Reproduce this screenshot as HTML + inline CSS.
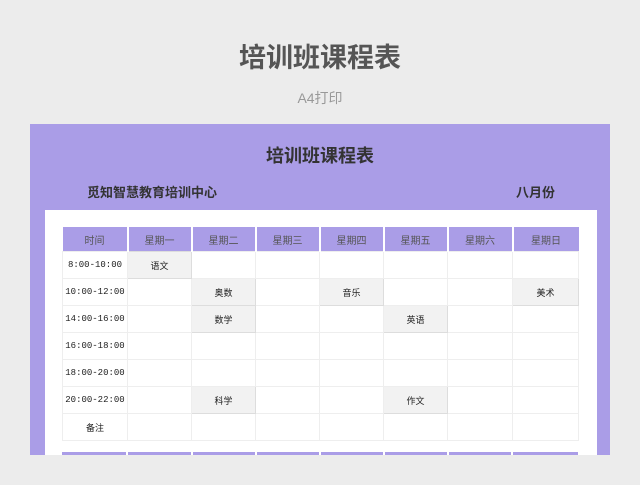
<!DOCTYPE html><html><head><meta charset="utf-8"><style>
body{margin:0;width:640px;height:485px;background:#ececec;font-family:"Liberation Sans","Noto Sans CJK SC",sans-serif;position:relative;overflow:hidden}
.t{position:absolute;left:0;width:640px;text-align:center}
.p{position:absolute;left:30px;top:124px;width:580px;height:331px;background:#aa9de7}
.w{position:absolute;left:45px;top:210px;width:552px;height:245px;background:#fff}
table{position:absolute;left:62px;top:227px;width:516px;border-collapse:collapse;table-layout:fixed}
td{height:26px;border:1px solid #eee;font-size:9px;text-align:center;color:#222;padding:0}
td:first-child{font-family:"Liberation Mono","Noto Sans CJK SC",monospace;font-size:9px}
th{height:24px;background:#aa9de7;color:#555;font-weight:normal;font-size:10px;border-left:2px solid #fff;border-right:0;padding:0}
th:first-child{border-left:0}
.g{background:#f2f2f2;border:1px solid #ddd}
.s{position:absolute;top:452px;height:3px;background:#aa9de7}
</style></head><body>
<div class="t" style="top:36px;font-size:27px;color:#555;font-weight:bold">培训班课程表</div>
<div class="t" style="top:88px;font-size:14px;color:#999">A4打印</div>
<div class="p"></div>
<div class="t" style="top:142px;font-size:18px;font-weight:bold;color:#333">培训班课程表</div>
<div style="position:absolute;left:87px;top:182px;font-size:13px;font-weight:bold;color:#333">觅知智慧教育培训中心</div>
<div style="position:absolute;left:516px;top:182px;font-size:13px;font-weight:bold;color:#333">八月份</div>
<div class="w"></div>
<table>
<colgroup><col style="width:65px"><col style="width:64px"><col style="width:64px"><col style="width:64px"><col style="width:64px"><col style="width:64px"><col style="width:65px"><col style="width:66px"></colgroup>
<tr><th>时间</th><th>星期一</th><th>星期二</th><th>星期三</th><th>星期四</th><th>星期五</th><th>星期六</th><th>星期日</th></tr>
<tr><td>8:00-10:00</td><td class="g">语文</td><td></td><td></td><td></td><td></td><td></td><td></td></tr>
<tr><td>10:00-12:00</td><td></td><td class="g">奥数</td><td></td><td class="g">音乐</td><td></td><td></td><td class="g">美术</td></tr>
<tr><td>14:00-16:00</td><td></td><td class="g">数学</td><td></td><td></td><td class="g">英语</td><td></td><td></td></tr>
<tr><td>16:00-18:00</td><td></td><td></td><td></td><td></td><td></td><td></td><td></td></tr>
<tr><td>18:00-20:00</td><td></td><td></td><td></td><td></td><td></td><td></td><td></td></tr>
<tr><td>20:00-22:00</td><td></td><td class="g">科学</td><td></td><td></td><td class="g">作文</td><td></td><td></td></tr>
<tr><td>备注</td><td></td><td></td><td></td><td></td><td></td><td></td><td></td></tr>
</table>
<div class="s" style="left:62px;width:64px"></div><div class="s" style="left:128px;width:63px"></div><div class="s" style="left:193px;width:62px"></div><div class="s" style="left:257px;width:62px"></div><div class="s" style="left:321px;width:62px"></div><div class="s" style="left:385px;width:62px"></div><div class="s" style="left:449px;width:62px"></div><div class="s" style="left:513px;width:65px"></div>
</body></html>
